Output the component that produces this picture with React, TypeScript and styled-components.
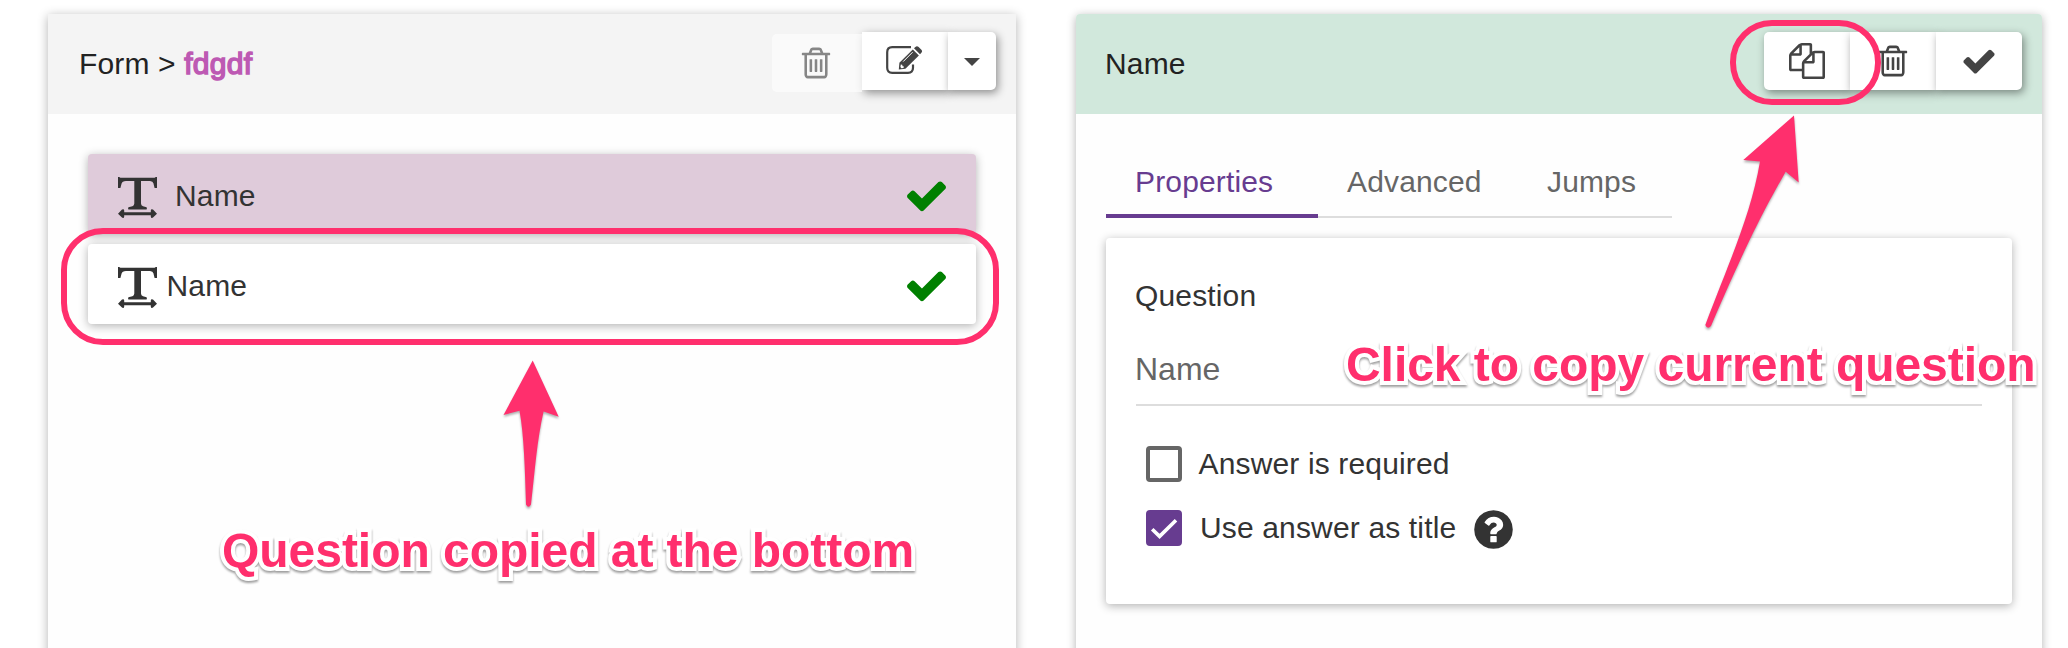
import React from "react";
import styled, { createGlobalStyle, css } from "styled-components";

const PINK = "#ff2f6d";
const PURPLE = "#673c90";

const GlobalStyle = createGlobalStyle`
  * { box-sizing: border-box; }
  body {
    margin: 0;
    background: #fff;
    overflow: hidden;
    font-family: "Liberation Sans", Arial, sans-serif;
    font-size: 30px;
    letter-spacing: 0.15px;
    color: #333;
  }
`;

const Page = styled.main`
  position: relative;
  display: grid;
  grid-template-columns: 968px 966px;
  column-gap: 60px;
  width: 2068px;
  height: 648px;
  padding: 14px 0 0 48px;
  overflow: hidden;
`;

const Panel = styled.section<{ $radius?: number }>`
  height: 680px;
  border-radius: ${(p) => p.$radius ?? 0}px;
  background: #fefefe;
  box-shadow: 0 2px 10px rgba(0, 0, 0, 0.3);
`;

const PanelHeader = styled.header<{ $tone: "grey" | "green" }>`
  display: flex;
  justify-content: space-between;
  align-items: flex-start;
  height: 100px;
  padding: 0 20px 0 ${(p) => (p.$tone === "grey" ? 31 : 29)}px;
  border-radius: inherit;
  border-bottom-left-radius: 0;
  border-bottom-right-radius: 0;
  background: ${(p) => (p.$tone === "grey" ? "#f4f4f4" : "#d1e8dc")};
  color: #222;
`;

const Title = styled.div`
  line-height: 100px;
  white-space: pre;
`;

const FormName = styled.span`
  color: #bd59b3;
  letter-spacing: 0.3px;
  -webkit-text-stroke: 1.5px #bd59b3;
`;

const ButtonGroup = styled.div`
  display: flex;
  padding-top: 18px;
`;

const Button = styled.button<{ $width: number; $first?: boolean; $last?: boolean; $disabled?: boolean }>`
  display: flex;
  align-items: center;
  justify-content: center;
  width: ${(p) => p.$width}px;
  height: 58px;
  padding: 0;
  border: 0;
  border-radius: ${(p) => (p.$first ? "5px" : "0")} ${(p) => (p.$last ? "5px 5px" : "0 0")} ${(p) => (p.$first ? "5px" : "0")};
  background: #fff;
  color: #444;
  box-shadow: 2px 3px 9px rgba(0, 0, 0, 0.42);
  ${(p) =>
    p.$disabled &&
    css`
      margin-top: 2px;
      padding-right: 3px;
      opacity: 0.62;
      box-shadow: none;
    `}
`;

const Icon = styled.svg<{ $size: number }>`
  display: block;
  flex: none;
  width: ${(p) => p.$size}px;
  height: ${(p) => p.$size}px;
  fill: currentColor;
`;

const EditGlyph = styled.svg`
  width: 37px;
  height: 29px;
  margin: 0 1px 2px 0;
  fill: currentColor;
`;

const Caret = styled.svg`
  width: 16px;
  height: 8px;
  margin-top: 2px;
  fill: currentColor;
`;

const QuestionList = styled.div`
  display: flex;
  flex-direction: column;
  gap: 10px;
  padding: 40px;
`;

const QuestionRow = styled.div<{ $selected?: boolean }>`
  display: flex;
  align-items: center;
  height: 80px;
  padding: 0 27px 0 30px;
  border-radius: 4px;
  background: ${(p) => (p.$selected ? "#dfcbda" : "#fff")};
  box-shadow: 0 2px 10px rgba(0, 0, 0, 0.3);
`;

const QuestionLabel = styled.span<{ $indent: number }>`
  flex: 1;
  padding: 3px 0 0 ${(p) => p.$indent}px;
`;

const TextGlyph = styled.svg`
  width: 39px;
  height: 41px;
  margin-top: 7px;
  fill: #333;
`;

const DoneMark = styled.span`
  color: #008000;
  padding-top: 3px;
`;

const EditorBody = styled.div`
  padding: 40px 30px 0;
`;

const Tabs = styled.nav`
  display: flex;
  width: 566px;
  height: 64px;
  box-shadow: inset 0 -2px 0 #ddd;
`;

const Tab = styled.div<{ $width: number; $active?: boolean }>`
  width: ${(p) => p.$width}px;
  height: 64px;
  padding-left: 29px;
  border-bottom: 4px solid ${(p) => (p.$active ? PURPLE : "transparent")};
  line-height: 55px;
  color: ${(p) => (p.$active ? PURPLE : "#666")};
`;

const Card = styled.div`
  height: 366px;
  margin-top: 20px;
  padding: 30px;
  border-radius: 4px;
  background: #fff;
  box-shadow: 0 2px 10px rgba(0, 0, 0, 0.3);
`;

const FieldLabel = styled.div`
  height: 54px;
  line-height: 56px;
  text-indent: -1px;
`;

const Field = styled.div`
  height: 84px;
  border-bottom: 2px solid #ddd;
  font-size: 32px;
  line-height: 94px;
  letter-spacing: 0;
  text-indent: -1px;
  color: #666;
`;

const Options = styled.div`
  display: flex;
  flex-direction: column;
  gap: 28px;
  padding: 40px 0 0 10px;
`;

const Option = styled.label`
  display: flex;
  align-items: center;
  height: 36px;
  line-height: 36px;
`;

const CheckBox = styled.span<{ $checked?: boolean }>`
  width: 36px;
  height: 36px;
  margin-right: ${(p) => (p.$checked ? 18 : 16.5)}px;
  border: 4px solid ${(p) => (p.$checked ? PURPLE : "#666")};
  border-radius: 4px;
  background: ${(p) => (p.$checked ? PURPLE : "#fff")};

  svg {
    display: block;
    width: 28px;
    height: 28px;
    fill: none;
    stroke: #fff;
    stroke-width: 3.6;
  }
`;

const HelpMark = styled.span`
  margin: 3px 0 0 15px;
`;

const Ring = styled.div<{ $x: number; $y: number; $w: number; $h: number }>`
  position: absolute;
  left: ${(p) => p.$x}px;
  top: ${(p) => p.$y}px;
  width: ${(p) => p.$w}px;
  height: ${(p) => p.$h}px;
  border: 6px solid ${PINK};
  border-radius: 42px;
`;

const Arrows = styled.svg`
  position: absolute;
  left: 0;
  top: 0;
  width: 2068px;
  height: 648px;
  fill: ${PINK};
  filter: drop-shadow(0 2px 1px rgba(0, 0, 0, 0.3));
  pointer-events: none;
`;

const Callout = styled.div<{ $x: number; $y: number }>`
  position: absolute;
  left: ${(p) => p.$x}px;
  top: ${(p) => p.$y}px;
  font-size: 48px;
  font-weight: 700;
  line-height: 54px;
  letter-spacing: -0.04px;
  white-space: nowrap;
  color: ${PINK};
  -webkit-text-stroke: 8px #fff;
  paint-order: stroke fill;
  stroke-linejoin: round;
  filter: drop-shadow(0 2px 1px rgba(0, 0, 0, 0.38));
`;

const PATHS = {
  check:
    "M1671 566q0 40-28 68l-724 724-136 136q-28 28-68 28t-68-28l-136-136-362-362q-28-28-28-68t28-68l136-136q28-28 68-28t68 28l294 295 656-657q28-28 68-28t68 28l136 136q28 28 28 68z",
  copy: "M1696 384q40 0 68 28t28 68v1216q0 40-28 68t-68 28h-960q-40 0-68-28t-28-68v-288h-544q-40 0-68-28t-28-68v-672q0-40 20-88t48-76l408-408q28-28 76-48t88-20h416q40 0 68 28t28 68v328q68-40 128-40h416zm-544 213l-299 299h299v-299zm-640-384l-299 299h299v-299zm196 647l316-316v-416h-384v416q0 40-28 68t-68 28h-416v640h512v-256q0-40 20-88t48-76zm956 804v-1152h-384v416q0 40-28 68t-68 28h-416v640h896z",
  trash:
    "M704 736v576q0 14-9 23t-23 9h-64q-14 0-23-9t-9-23v-576q0-14 9-23t23-9h64q14 0 23 9t9 23zm256 0v576q0 14-9 23t-23 9h-64q-14 0-23-9t-9-23v-576q0-14 9-23t23-9h64q14 0 23 9t9 23zm256 0v576q0 14-9 23t-23 9h-64q-14 0-23-9t-9-23v-576q0-14 9-23t23-9h64q14 0 23 9t9 23zm128 724v-948h-896v948q0 22 7 40.5t14.5 27 10.5 8.5h832q3 0 10.5-8.5t14.5-27 7-40.5zm-672-1076h448l-48-117q-7-9-17-11h-317q-10 2-17 11zm928 32v64q0 14-9 23t-23 9h-96v948q0 83-47 143.5t-113 60.5h-832q-66 0-113-58.5t-47-141.5v-952h-96q-14 0-23-9t-9-23v-64q0-14 9-23t23-9h309l70-167q15-37 54-63t79-26h320q40 0 79 26t54 63l70 167h309q14 0 23 9t9 23z",
  help: "M1024 1376v-192q0-14-9-23t-23-9h-192q-14 0-23 9t-9 23v192q0 14 9 23t23 9h192q14 0 23-9t9-23zm256-672q0-88-55.5-163t-138.5-116-170-41q-243 0-371 213-15 24 8 42l132 100q7 6 19 6 16 0 25-12 53-68 86-92 34-24 86-24 48 0 85.5 26t37.5 59q0 38-20 61t-68 45q-63 28-115.5 86.5t-52.5 125.5v36q0 14 9 23t23 9h192q14 0 23-9t9-23q0-19 21.5-49.5t54.5-49.5q32-18 49-28.5t46-35 44.5-48 28-60.5 12.5-81zm384 192q0 209-103 385.5t-279.5 279.5-385.5 103-385.5-103-279.5-279.5-103-385.5 103-385.5 279.5-279.5 385.5-103 385.5 103 279.5 279.5 103 385.5z",
};

function Glyph({ name, size = 36 }: { name: keyof typeof PATHS; size?: number }) {
  return (
    <Icon $size={size} viewBox="0 0 1792 1792">
      <path d={PATHS[name]} />
    </Icon>
  );
}

function EditIcon() {
  return (
    <EditGlyph viewBox="0 0 37 29">
      <path
        d="M25 1.2H6.2Q1.2 1.2 1.2 6.2V21.8Q1.2 26.8 6.2 26.8H22Q27 26.8 27 21.8V18.5"
        fill="none"
        stroke="currentColor"
        strokeWidth="2.2"
      />
      <path d="M12.8 23.4L13.4 16.8L26.8 3.4L32.9 9.4L19.4 22.8Z" />
      <path d="M28 2.2L29.4.9Q31 -.4 32.6 1L35.4 3.8Q36.7 5.4 35.4 6.8L34 8.2Z" />
      <path d="M17.2 15.6L26.6 6.2" fill="none" stroke="#fff" strokeWidth="1" />
      <path d="M14.8 18.4L16.2 18.8L16.6 20.2L18 20.6L17.4 22L15.4 22.2L14.4 21Z" fill="#fff" />
    </EditGlyph>
  );
}

function TextWidthIcon() {
  return (
    <TextGlyph viewBox="0 0 39 41">
      <path d="M0 0H1.2L2.4 .8H36.6L37.8 0H39V11H36.6L35.4 6.2Q35 4.2 32 4H23V26.5Q23 28.6 25 29.2L28.6 30.2Q29.4 32.4 28.4 32.4H10.6Q9.6 32.4 10.4 30.2L14.4 29.2Q16.2 28.6 16.3 26.5V4H8Q4.2 4.2 3.6 6.4L2.4 11H0Z" />
      <path d="M0 36.7L4 32.6Q6 31.4 6.2 33.6V35.2H32.8V33.6Q33 31.4 35 32.6L39 36.7L35 40.6Q33 41.8 32.8 39.6V38.2H6.2V39.6Q6 41.8 4 40.6Z" />
    </TextGlyph>
  );
}

function Question({ label, indent, selected }: { label: string; indent: number; selected?: boolean }) {
  return (
    <QuestionRow $selected={selected}>
      <TextWidthIcon />
      <QuestionLabel $indent={indent}>{label}</QuestionLabel>
      <DoneMark>
        <Glyph name="check" size={45} />
      </DoneMark>
    </QuestionRow>
  );
}

export default function App() {
  return (
    <>
      <GlobalStyle />
      <Page>
        <Panel>
          <PanelHeader $tone="grey">
            <Title>
              Form &gt; <FormName>fdgdf</FormName>
            </Title>
            <ButtonGroup>
              <Button $width={90} $first $disabled>
                <Glyph name="trash" />
              </Button>
              <Button $width={86}>
                <EditIcon />
              </Button>
              <Button $width={48} $last>
                <Caret viewBox="0 0 16 8">
                  <path d="M0 0H16L8 8Z" />
                </Caret>
              </Button>
            </ButtonGroup>
          </PanelHeader>
          <QuestionList>
            <Question label="Name" indent={18} selected />
            <Question label="Name" indent={9.5} />
          </QuestionList>
        </Panel>

        <Panel $radius={4}>
          <PanelHeader $tone="green">
            <Title>Name</Title>
            <ButtonGroup>
              <Button $width={86} $first>
                <Glyph name="copy" />
              </Button>
              <Button $width={86}>
                <Glyph name="trash" />
              </Button>
              <Button $width={86} $last>
                <Glyph name="check" />
              </Button>
            </ButtonGroup>
          </PanelHeader>
          <EditorBody>
            <Tabs>
              <Tab $width={212} $active>
                Properties
              </Tab>
              <Tab $width={200}>Advanced</Tab>
              <Tab $width={154}>Jumps</Tab>
            </Tabs>
            <Card>
              <FieldLabel>Question</FieldLabel>
              <Field>Name</Field>
              <Options>
                <Option>
                  <CheckBox />
                  Answer is required
                </Option>
                <Option>
                  <CheckBox $checked>
                    <svg viewBox="0 0 28 28">
                      <path d="M2.2 15.2L9.6 22.4L26 6.2" />
                    </svg>
                  </CheckBox>
                  Use answer as title
                  <HelpMark>
                    <Glyph name="help" size={45} />
                  </HelpMark>
                </Option>
              </Options>
            </Card>
          </EditorBody>
        </Panel>

        <Ring $x={61} $y={228} $w={938} $h={117} />
        <Ring $x={1730} $y={20} $w={151} $h={85} />
        <Arrows viewBox="0 0 2068 648">
          <path d="M532.7 360.5L558.7 416.7L543.6 411.5C537 440 535 470 531 504.5Q528.5 509 526 504.5C525 470 524 435 519.5 410.7L503.5 415Z" />
          <path d="M1794 115.5L1798.7 182.5L1785.7 171.7C1765 208 1748 240 1711 326Q1707.5 330 1705.3 325C1729 262 1751 215 1760 161.5L1743.3 160Z" />
        </Arrows>
        <Callout $x={222} $y={524}>
          Question copied at the bottom
        </Callout>
        <Callout $x={1346} $y={337.5}>
          Click to copy current question
        </Callout>
      </Page>
    </>
  );
}
